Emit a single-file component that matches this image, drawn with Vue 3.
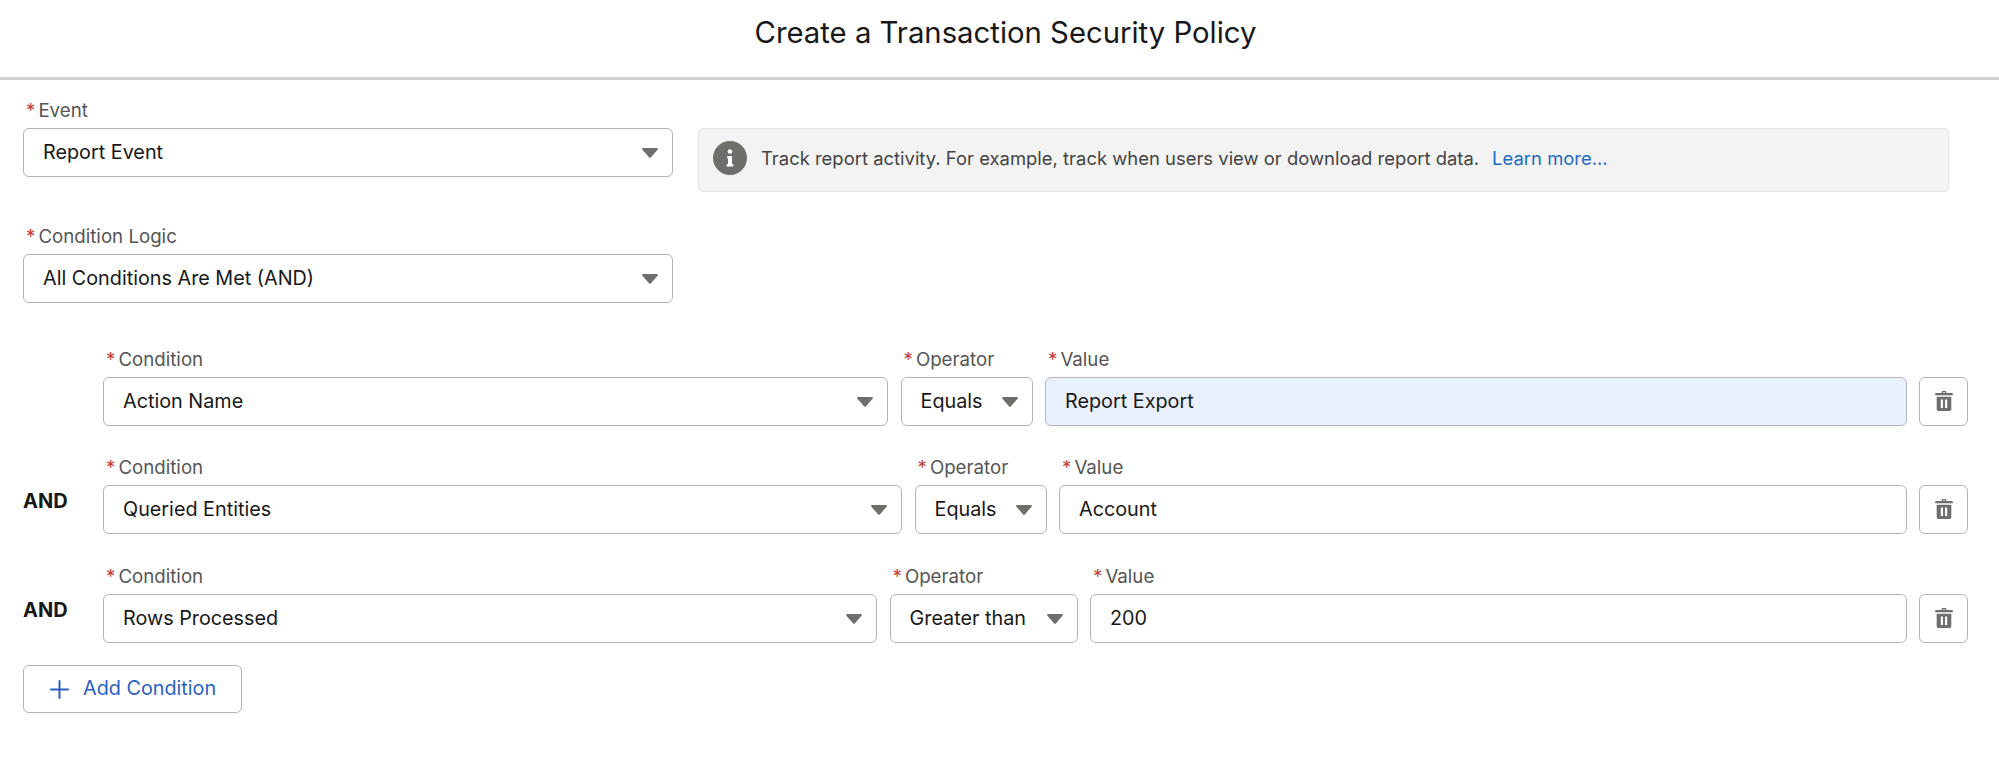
<template>
  <div class="page">
    <header class="page-header">Create a Transaction Security Policy</header>

    <div class="form">
      <div class="top-row">
        <div class="field field-main">
          <label class="field-label"><abbr class="req">*</abbr>Event</label>
          <div class="select-box">
            <span>Report Event</span>
            <svg class="caret" viewBox="0 0 16 10"><path d="M1.2 0h13.6c.9 0 1.400 1 .8 1.700L8.800 9.500c-.4.5-1.200.5-1.600 0L.4 1.700C-.2 1 .3 0 1.200 0z" /></svg>
          </div>
        </div>
        <div class="info-box">
          <span class="info-icon">
            <svg viewBox="0 0 34 34">
              <circle cx="17" cy="17" r="17" fill="#706e6b" />
              <circle cx="17" cy="10.500" r="2.300" fill="#fff" />
              <path d="M14.200 15h4.800v8h1.300v2.600h-6.600V23h1.300v-5.400h-.8z" fill="#fff" />
            </svg>
          </span>
          <span class="info-text">Track report activity. For example, track when users view or download report data.</span>
          <a class="info-link">Learn more...</a>
        </div>
      </div>

      <div class="field field-main logic-field">
        <label class="field-label"><abbr class="req">*</abbr>Condition Logic</label>
        <div class="select-box">
          <span>All Conditions Are Met (AND)</span>
          <svg class="caret" viewBox="0 0 16 10"><path d="M1.2 0h13.6c.9 0 1.400 1 .8 1.700L8.800 9.500c-.4.5-1.200.5-1.600 0L.4 1.700C-.2 1 .3 0 1.200 0z" /></svg>
        </div>
      </div>

      <div class="conditions">
        <div v-for="(row, i) in rows" :key="row.condition" class="condition-row">
          <div class="and-col"><span v-if="i > 0">AND</span></div>
          <div class="field" :style="{ width: row.conditionWidth + 'px' }">
            <label class="field-label"><abbr class="req">*</abbr>Condition</label>
            <div class="select-box">
              <span>{{ row.condition }}</span>
              <svg class="caret" viewBox="0 0 16 10"><path d="M1.2 0h13.6c.9 0 1.400 1 .8 1.700L8.800 9.500c-.4.5-1.200.5-1.600 0L.4 1.700C-.2 1 .3 0 1.200 0z" /></svg>
            </div>
          </div>
          <div class="field" :style="{ width: row.operatorWidth + 'px' }">
            <label class="field-label"><abbr class="req">*</abbr>Operator</label>
            <div class="select-box">
              <span>{{ row.operator }}</span>
              <svg class="caret" viewBox="0 0 16 10"><path d="M1.2 0h13.6c.9 0 1.400 1 .8 1.700L8.800 9.500c-.4.5-1.200.5-1.600 0L.4 1.700C-.2 1 .3 0 1.200 0z" /></svg>
            </div>
          </div>
          <div class="field field-value">
            <label class="field-label"><abbr class="req">*</abbr>Value</label>
            <div class="value-box" :class="{ autofilled: row.autofilled }">{{ row.value }}</div>
          </div>
          <button class="delete-btn" type="button">
            <svg viewBox="0 0 18 20" fill="#706e6b">
              <path d="M6.700 2V1.200C6.700.5 7.200 0 7.900 0h2.200c.7 0 1.200.5 1.200 1.200V2h5.500c.6 0 1 .4 1 1v1.200H.2V3c0-.6.4-1 1-1zM8 2h2v-.8H8z" />
              <path fill-rule="evenodd" d="M1.700 5.700h14.600v12.500c0 1-.8 1.800-1.800 1.800h-11c-1 0-1.800-.8-1.800-1.800zM5.800 8.500v8.600h2.200V8.500zm4.200 0v8.600h2.200V8.500z" />
            </svg>
          </button>
        </div>
      </div>

      <button class="add-btn" type="button">
        <svg viewBox="0 0 19 19"><path d="M9.500 1v17M1 9.500h17" stroke="#2a5fc4" stroke-width="2" fill="none" stroke-linecap="round" /></svg>
        Add Condition
      </button>
    </div>
  </div>
</template>

<script setup>
const rows = [
  { condition: "Action Name", conditionWidth: 785, operator: "Equals", operatorWidth: 132, value: "Report Export", autofilled: true },
  { condition: "Queried Entities", conditionWidth: 799, operator: "Equals", operatorWidth: 132, value: "Account" },
  { condition: "Rows Processed", conditionWidth: 774, operator: "Greater than", operatorWidth: 188, value: "200" },
];
</script>

<style>
html,
body {
  margin: 0;
  background: #fff;
}
</style>

<style scoped>
.page {
  width: 1999px;
  height: 763px;
  overflow: hidden;
  background: #fff;
  font-family: Inter, "Liberation Sans", sans-serif;
  color: #181818;
  box-sizing: border-box;
}

.page-header {
  height: 77px;
  line-height: 66px;
  padding-left: 12px;
  text-align: center;
  font-size: 29.300px;
  color: #181818;
  border-bottom: 3px solid #d0d0d0;
}

.form {
  padding: 21px 31px 0 23px;
}

.top-row {
  display: flex;
  align-items: flex-start;
  gap: 25px;
  margin-bottom: 35px;
}

.field-main {
  width: 650px;
  flex-shrink: 0;
}

.field-label {
  display: block;
  height: 20px;
  line-height: 20px;
  margin-bottom: 7px;
  padding-left: 3px;
  font-size: 18.700px;
  color: #555;
}

.req {
  color: #c23934;
  margin-right: 3px;
  text-decoration: none;
}

.select-box,
.value-box {
  height: 49px;
  box-sizing: border-box;
  border: 1.500px solid #b4b4b4;
  border-radius: 6px;
  display: flex;
  align-items: center;
  font-size: 19.800px;
  background: #fff;
  padding-bottom: 2px;
}

.select-box {
  justify-content: space-between;
  padding-left: 19px;
  padding-right: 14px;
}

.value-box {
  padding-left: 19px;
  padding-right: 19px;
}

.value-box.autofilled {
  background: #e8f0fe;
}

.caret {
  width: 16px;
  height: 10px;
  margin-top: 2px;
  fill: #706e6b;
  flex-shrink: 0;
}

.info-box {
  flex: 1;
  height: 64px;
  margin-top: 27px;
  margin-right: 19px;
  padding-bottom: 4px;
  box-sizing: border-box;
  border: 1px solid #e3e3e3;
  border-radius: 5px;
  background: #f3f3f3;
  display: flex;
  align-items: center;
  padding-left: 14px;
  font-size: 18.450px;
  color: #444;
}

.info-icon {
  width: 34px;
  height: 34px;
  margin-right: 14px;
  display: flex;
}

.info-link {
  margin-left: 13px;
  color: #1b6ec2;
}

.logic-field {
  margin-bottom: 47px;
}

.conditions {
  display: flex;
  flex-direction: column;
  gap: 32px;
}

.condition-row {
  display: flex;
  align-items: flex-end;
  gap: 12.500px;
}

.condition-row:last-child {
  margin-top: 1px;
}

.and-col {
  width: 67.500px;
  flex-shrink: 0;
  font-size: 20px;
  font-weight: 700;
  margin-bottom: 22px;
  line-height: 22px;
}

.field-value {
  flex: 1;
}

.delete-btn {
  width: 49px;
  height: 49px;
  flex-shrink: 0;
  padding: 0 0 2px;
  border: 1.500px solid #b4b4b4;
  border-radius: 6px;
  background: #fff;
  display: flex;
  align-items: center;
  justify-content: center;
}

.delete-btn svg {
  width: 18px;
  height: 20px;
}

.add-btn {
  margin-top: 22px;
  width: 219px;
  height: 48px;
  padding: 0 0 2px 26px;
  box-sizing: border-box;
  border: 1.500px solid #b4b4b4;
  border-radius: 6px;
  background: #fff;
  color: #2a5fc4;
  font-family: inherit;
  font-size: 19.800px;
  display: flex;
  align-items: center;
  gap: 14px;
}

.add-btn svg {
  width: 19px;
  height: 19px;
  margin-top: 2px;
}
</style>
